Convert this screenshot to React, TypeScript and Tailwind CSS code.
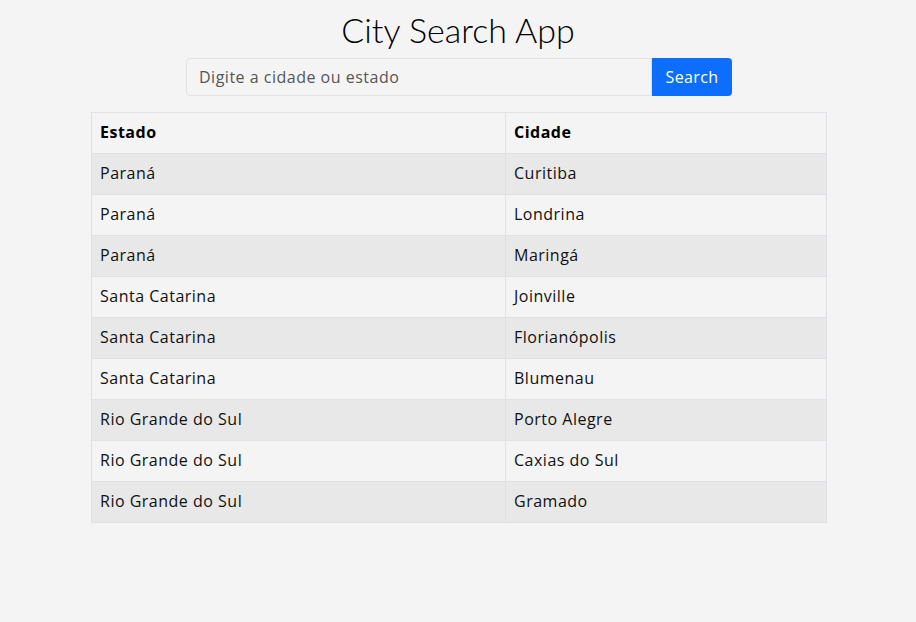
const rows: [string, string][] = [
  ["Paraná", "Curitiba"],
  ["Paraná", "Londrina"],
  ["Paraná", "Maringá"],
  ["Santa Catarina", "Joinville"],
  ["Santa Catarina", "Florianópolis"],
  ["Santa Catarina", "Blumenau"],
  ["Rio Grande do Sul", "Porto Alegre"],
  ["Rio Grande do Sul", "Caxias do Sul"],
  ["Rio Grande do Sul", "Gramado"],
];

export default function App() {
  return (
    <div className="min-h-[622px] bg-[#f4f4f4] pt-[9px] font-['Open_Sans',sans-serif] text-[#111]">
      <h1 className="text-center text-[34px] leading-[42px] font-light text-black font-['Lato',sans-serif]">
        City Search App
      </h1>
      <div className="mx-auto mt-[7px] flex w-[546px] translate-x-[1px]">
        <input
          type="text"
          placeholder="Digite a cidade ou estado"
          className="h-[38px] flex-1 rounded-l-[4px] border border-[#dee2e6] bg-[#f4f4f4] px-3 text-[16px] tracking-[0.5px] text-[#333] placeholder:text-[#555] outline-none"
        />
        <button className="h-[38px] w-[80px] rounded-r-[4px] bg-[#0d6efd] pb-[1px] text-[16px] tracking-[0.4px] text-white">
          Search
        </button>
      </div>
      <table className="mx-auto mt-4 w-[736px] translate-x-[1px] border-collapse text-[16px] tracking-[0.5px]">
        <thead>
          <tr className="h-[41px]">
            <th className="w-[414px] border border-[#dee2e6] px-2 pb-[2px] text-left font-bold text-black">Estado</th>
            <th className="border border-[#dee2e6] px-2 pb-[2px] text-left font-bold text-black">Cidade</th>
          </tr>
        </thead>
        <tbody>
          {rows.map(([estado, cidade], i) => (
            <tr key={cidade} className={i % 2 === 0 ? "h-[41px] bg-[#e8e8e8]" : "h-[41px] bg-[#f4f4f4]"}>
              <td className="border border-[#dee2e6] px-2 pb-[2px]">{estado}</td>
              <td className="border border-[#dee2e6] px-2 pb-[2px]">{cidade}</td>
            </tr>
          ))}
        </tbody>
      </table>
    </div>
  );
}
